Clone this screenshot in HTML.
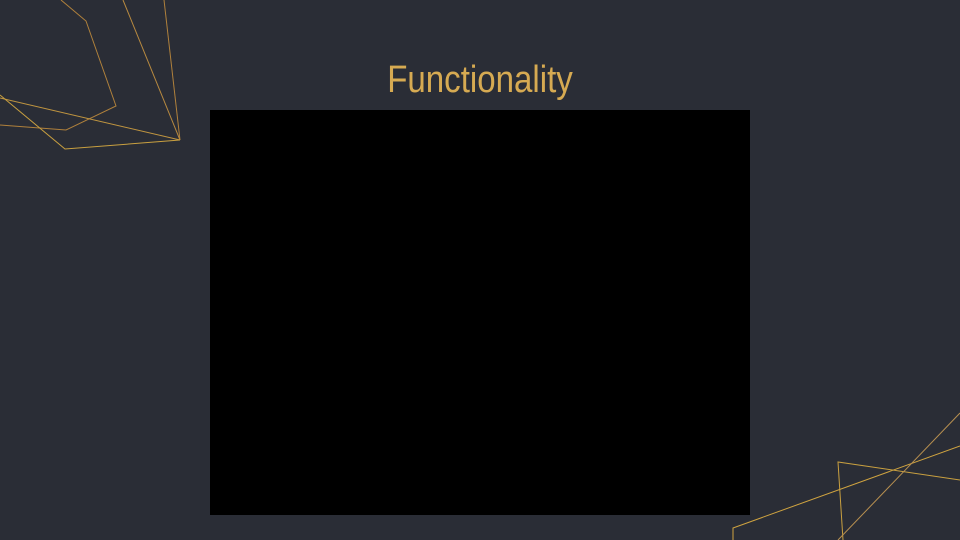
<!DOCTYPE html>
<html><head><meta charset="utf-8"><style>
html,body{margin:0;padding:0}
body{width:960px;height:540px;background:#2a2d36;position:relative;overflow:hidden}
.t{position:absolute;left:0;width:960px;top:58px;text-align:center;color:#d6aa52;font-family:"Liberation Sans",sans-serif;font-size:38px;line-height:44px;transform:scaleX(0.87);transform-origin:480px 0}
.b{position:absolute;left:210px;top:110px;width:540px;height:405px;background:#000}
svg{position:absolute;left:0;top:0}
</style></head><body>
<svg width="960" height="540" fill="none" stroke-width="1">
<polyline points="61,0 86,21 116,106 66,130 0,125" stroke="#b0813c"/>
<line x1="123" y1="0" x2="180" y2="140" stroke="#b88a40"/>
<line x1="164" y1="0" x2="180" y2="140" stroke="#b0813c"/>
<line x1="0" y1="98" x2="180" y2="140" stroke="#c09540"/>
<polyline points="0,95 65,149 180,140" stroke="#c9a040"/>
<polyline points="733,540 733,528 960,446" stroke="#d0a440"/>
<polyline points="843,540 838,462 960,480" stroke="#c9a040"/>
<line x1="960" y1="413" x2="838" y2="540" stroke="#b89050"/>
</svg>
<div class="t">Functionality</div>
<div class="b"></div>
</body></html>
